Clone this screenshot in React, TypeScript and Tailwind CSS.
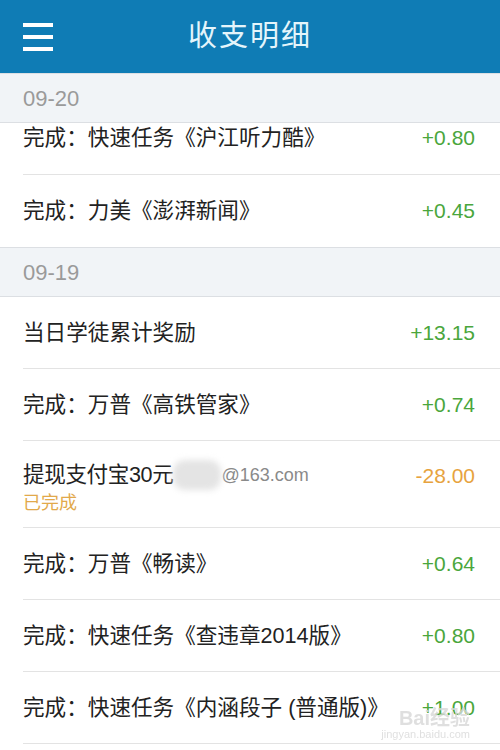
const font = "font-['Liberation_Sans','Noto_Sans_CJK_SC',sans-serif]";

type Item = { title: string; amount: string; kind?: "in" | "out"; sub?: string; blur?: boolean };

const sept: Item[] = [
  { title: "完成：快速任务《沪江听力酷》", amount: "+0.80" },
  { title: "完成：力美《澎湃新闻》", amount: "+0.45" },
];

const sep19: Item[] = [
  { title: "当日学徒累计奖励", amount: "+13.15" },
  { title: "完成：万普《高铁管家》", amount: "+0.74" },
  { title: "提现支付宝30元", amount: "-28.00", kind: "out", sub: "已完成", blur: true },
  { title: "完成：万普《畅读》", amount: "+0.64" },
  { title: "完成：快速任务《查违章2014版》", amount: "+0.80" },
  { title: "完成：快速任务《内涵段子 (普通版)》", amount: "+1.00" },
];

function DateBar({ label }: { label: string }) {
  return (
    <div className="h-[50px] bg-[#f1f4f7] border-y border-[#dcdfe3] flex items-center px-[23px]">
      <span className="text-[22px] text-[#9a9a9a]">{label}</span>
    </div>
  );
}

function Amount({ item }: { item: Item }) {
  return (
    <span className={`text-[21px] leading-[28px] ${item.kind === "out" ? "text-[#e7a33e]" : "text-[#4aa63c]"}`}>
      {item.amount}
    </span>
  );
}

function Row({ item, last }: { item: Item; last?: boolean }) {
  return (
    <div className="pl-[23px]">
      <div
        className={`flex justify-between pr-[25px] ${
          item.sub ? "h-[87px] items-start pt-[19px]" : "h-[72px] items-center"
        } ${last ? "" : "border-b border-[#e3e3e3]"}`}
      >
        <div className="flex flex-col">
          <div className="flex items-center text-[21.6px] text-[#222] leading-[28px]">
            <span className={item.blur ? "tracking-[-0.4px]" : ""}>{item.title}</span>
            {item.blur && (
              <span className="flex items-center">
                <span className="w-[48px] h-[30px] rounded-[12px] bg-[#e4e4e4] blur-[3px]" />
                <span className="text-[18px] text-[#8a8a8a]">@163.com</span>
              </span>
            )}
          </div>
          {item.sub && <span className="text-[18px] text-[#e2a94b] leading-[24px] mt-[1px]">{item.sub}</span>}
        </div>
        <span className={item.sub ? "pt-[2px]" : ""}>
          <Amount item={item} />
        </span>
      </div>
    </div>
  );
}

export default function App() {
  return (
    <div className={`${font} relative w-[500px] h-[750px] overflow-hidden bg-white`}>
      <div className="h-[73px] bg-[#0f7cb5] flex items-center relative">
        <div className="absolute left-[23px] top-[23px] flex flex-col gap-[8px]">
          <span className="block w-[30px] h-[4px] bg-white" />
          <span className="block w-[30px] h-[4px] bg-white" />
          <span className="block w-[30px] h-[4px] bg-white" />
        </div>
        <h1 className="w-full text-center text-[29px] text-[#e4f5fb] tracking-[2px]">收支明细</h1>
      </div>

      <DateBar label="09-20" />
      <div className="pl-[23px]">
        <div className="h-[52px] flex items-start justify-between pr-[25px] pt-[1px] border-b border-[#e3e3e3]">
          <span className="text-[21.6px] text-[#222] leading-[28px]">{sept[0].title}</span>
          <Amount item={sept[0]} />
        </div>
      </div>
      <Row item={sept[1]} last />

      <DateBar label="09-19" />
      {sep19.map((it) => (
        <Row key={it.title} item={it} />
      ))}

      <div className="absolute right-[30px] bottom-[8px] flex flex-col items-end text-[#d8d8d8] opacity-80 pointer-events-none">
        <span className="text-[20px] font-bold leading-none">Bai经验</span>
        <span className="text-[11px] leading-tight">jingyan.baidu.com</span>
      </div>
    </div>
  );
}
